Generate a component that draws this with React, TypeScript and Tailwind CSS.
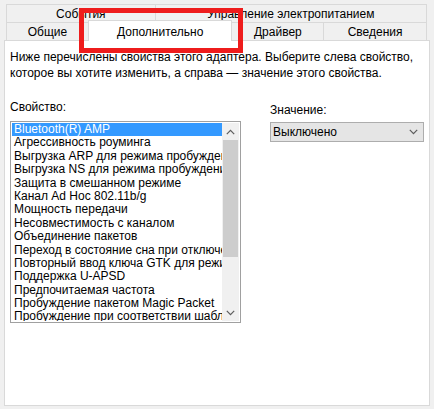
import React from "react";

const props = [
  "Bluetooth(R) AMP",
  "Агрессивность роуминга",
  "Выгрузка ARP для режима пробуждения",
  "Выгрузка NS для режима пробуждения",
  "Защита в смешанном режиме",
  "Канал Ad Hoc 802.11b/g",
  "Мощность передачи",
  "Несовместимость с каналом",
  "Объединение пакетов",
  "Переход в состояние сна при отключении",
  "Повторный ввод ключа GTK для режима",
  "Поддержка U-APSD",
  "Предпочитаемая частота",
  "Пробуждение пакетом Magic Packet",
  "Пробуждение при соответствии шаблону",
];

function Chevron({ up = false }: { up?: boolean }) {
  return (
    <svg width="9" height="6" viewBox="0 0 9 6" className={up ? "" : "rotate-180"}>
      <path d="M0.8 5.2 L4.5 1.3 L8.2 5.2" fill="none" stroke="#5d5d5d" strokeWidth="1.2" />
    </svg>
  );
}

function Tab({ label, className }: { label: string; className: string }) {
  return (
    <div
      className={`flex items-center justify-center border-t border-r border-[#d9d9d9] bg-[#f0f0f0] text-black ${className}`}
    >
      {label}
    </div>
  );
}

export default function App() {
  return (
    <div
      className="relative w-[434px] h-[409px] overflow-hidden bg-[#f0f0f0] pt-[4px] text-[12px] text-black"
      style={{ fontFamily: '"Liberation Sans", Arial, sans-serif' }}
    >
      {/* Tabs */}
      <div className="ml-[6px] w-[421px]">
        <div className="flex h-[18px] border-l border-[#d9d9d9]">
          <Tab label="События" className="w-[149px]" />
          <Tab label="Управление электропитанием" className="w-[272px]" />
        </div>
        <div className="flex h-[18px] items-end border-l border-[#d9d9d9]">
          <Tab label="Общие" className="w-[82px] h-[18px]" />
          <div className="relative z-10 -mb-px -ml-px flex h-[21px] w-[145px] items-start justify-center border-t border-r border-l border-[#d9d9d9] bg-white pt-[2px]">
            Дополнительно
          </div>
          <Tab label="Драйвер" className="w-[92px] h-[18px]" />
          <Tab label="Сведения" className="w-[103px] h-[18px]" />
        </div>
      </div>

      {/* Panel */}
      <div className="mx-[4px] h-[366px] border border-[#d9d9d9] bg-white px-[5px] pt-[8px]">
        <p className="whitespace-nowrap leading-[16px]">
          Ниже перечислены свойства этого адаптера. Выберите слева свойство,
          <br />
          которое вы хотите изменить, а справа — значение этого свойства.
        </p>

        <div className="mt-[18px] flex">
          {/* Property list */}
          <div className="w-[231px]">
            <div className="leading-[16px]">Свойство:</div>
            <div className="mt-[6px] flex h-[202px] border border-[#a0a0a0] p-px">
              <div className="flex-1 overflow-hidden">
                {props.map((p, i) => (
                  <div
                    key={p}
                    className={`h-[13.4px] overflow-hidden whitespace-nowrap pl-[2px] leading-[13.4px] ${
                      i === 0 ? "bg-[#3399ff] text-white" : ""
                    }`}
                  >
                    {p}
                  </div>
                ))}
              </div>
              <div className="flex w-[17px] flex-col bg-[#f0f0f0]">
                <div className="flex h-[17px] items-center justify-center">
                  <Chevron up />
                </div>
                <div className="mx-[1px] h-[117px] bg-[#cdcdcd]" />
                <div className="flex-1" />
                <div className="flex h-[17px] items-center justify-center">
                  <Chevron />
                </div>
              </div>
            </div>
          </div>

          {/* Value */}
          <div className="ml-[29px] w-[154px] pt-[3px]">
            <div className="leading-[16px]">Значение:</div>
            <div className="mt-[4px] flex h-[20px] items-center justify-between border border-[#adadad] bg-[#e5e5e5] pl-[2px] pr-[5px]">
              <span>Выключено</span>
              <Chevron />
            </div>
          </div>
        </div>
      </div>

      {/* Red highlight annotation */}
      <div className="absolute left-[79px] top-[8px] h-[45px] w-[164px] border-[5px] border-[#ee1c1c]" />
    </div>
  );
}
